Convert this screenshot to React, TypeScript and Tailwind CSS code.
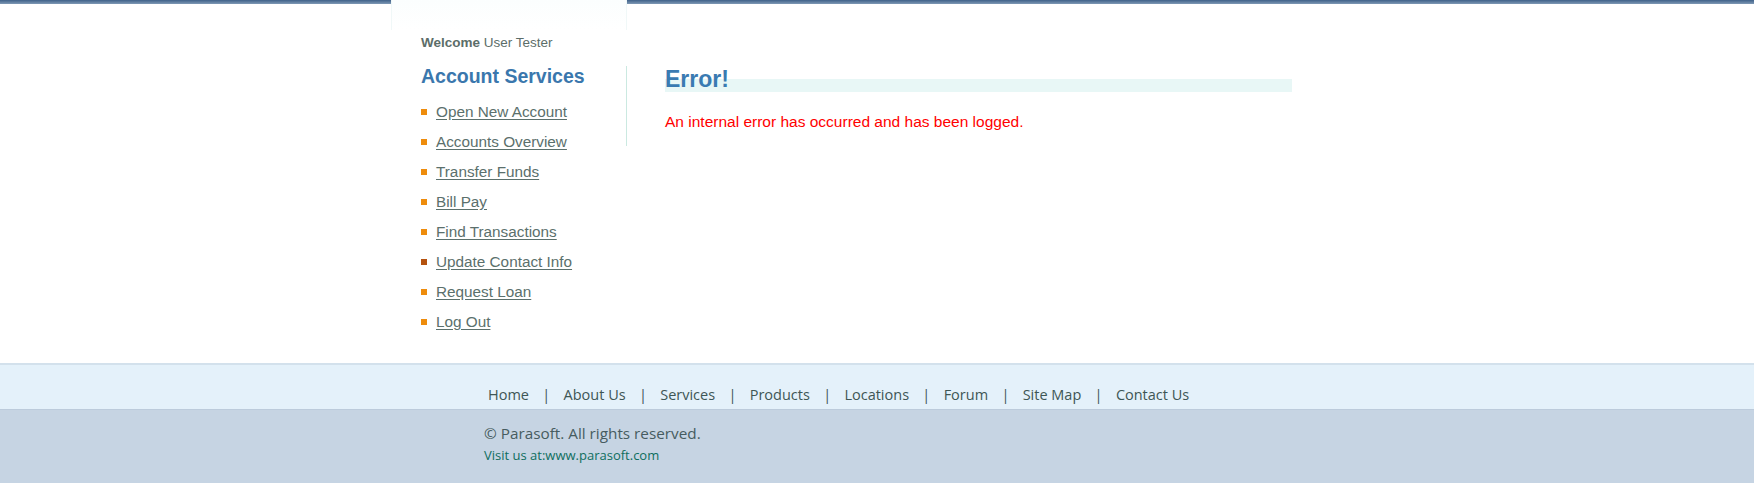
import React from 'react';

const links = [
  'Open New Account',
  'Accounts Overview',
  'Transfer Funds',
  'Bill Pay',
  'Find Transactions',
  'Update Contact Info',
  'Request Loan',
  'Log Out',
];

const footerLinks = ['Home', 'About Us', 'Services', 'Products', 'Locations', 'Forum', 'Site Map', 'Contact Us'];

export default function App() {
  return (
    <div className="min-h-[483px] bg-white font-['Liberation_Sans',Arial,sans-serif]">
      {/* top strip */}
      <div className="flex h-[30px]">
        <div className="flex-1 h-[4px] bg-[linear-gradient(to_bottom,#3f6189,#7f99b5)]" />
        <div className="w-[972px] flex">
          <div className="w-[236px] h-[30px] bg-[linear-gradient(to_bottom,#fbfefe,#ffffff)] border-x border-[#f0f8f8]" />
          <div className="flex-1 h-[4px] bg-[linear-gradient(to_bottom,#3f6189,#7f99b5)]" />
        </div>
        <div className="flex-1 h-[4px] bg-[linear-gradient(to_bottom,#3f6189,#7f99b5)]" />
      </div>

      <div className="w-[972px] mx-auto flex">
        {/* left panel */}
        <div className="w-[235px] pl-[30px] pb-[26px]">
          <p className="mt-[5px] text-[13.5px] leading-[16px] text-[#5c6d69]">
            <b>Welcome</b> User Tester
          </p>
          <h2 className="mt-[13px] text-[19.5px] leading-[24px] font-bold text-[#3a77ad]">Account Services</h2>
          <ul className="mt-[9px]">
            {links.map((l) => (
              <li key={l} className="flex items-center h-[30px]">
                <span
                  className={
                    l === 'Update Contact Info'
                      ? 'w-[6px] h-[6px] bg-[#b4520f] mr-[9px]'
                      : 'w-[6px] h-[6px] bg-[#ee8c0c] mr-[9px]'
                  }
                />
                <a href="#" className="text-[15.3px] leading-[30px] text-[#5b706c] underline underline-offset-2">
                  {l}
                </a>
              </li>
            ))}
          </ul>
        </div>

        {/* right panel */}
        <div className="flex-1 self-start mt-[36px] h-[80px] border-l border-[#cbe9e1] pl-[38px] pr-[71px]">
          <h1 className="h-[25px] mt-[1px] text-[23px] leading-[25px] font-bold text-[#3a7bb2] bg-[linear-gradient(to_bottom,transparent_12px,#e8f7f6_12px)]">
            Error!
          </h1>
          <p className="mt-[21px] text-[15.5px] leading-[18px] text-[#ff0000]">
            An internal error has occurred and has been logged.
          </p>
        </div>
      </div>

      {/* footer */}
      <div className="border-t-2 border-[#d3e1ec] bg-[#e4f1fa] h-[47px] border-b border-b-[#bccbdb]">
        <div className="w-[972px] mx-auto pl-[97px] pt-[21px] text-[14.5px] leading-[18px] text-[#3e5655] font-['Open_Sans',sans-serif]">
          {footerLinks.map((f, i) => (
            <span key={f}>
              <a href="#">{f}</a>
              {i < footerLinks.length - 1 && <span className="px-[13.3px]">|</span>}
            </span>
          ))}
        </div>
      </div>
      <div className="bg-[#c6d4e3] h-[73px]">
        <div className="w-[972px] mx-auto pl-[93px] pt-[14px] font-['Open_Sans',sans-serif]">
          <p className="text-[15.3px] leading-[18px] text-[#465c60]">© Parasoft. All rights reserved.</p>
          <p className="mt-[5px] text-[13px] leading-[16px] text-[#0f6e5e]">
            Visit us at:<a href="#">www.parasoft.com</a>
          </p>
        </div>
      </div>
    </div>
  );
}
